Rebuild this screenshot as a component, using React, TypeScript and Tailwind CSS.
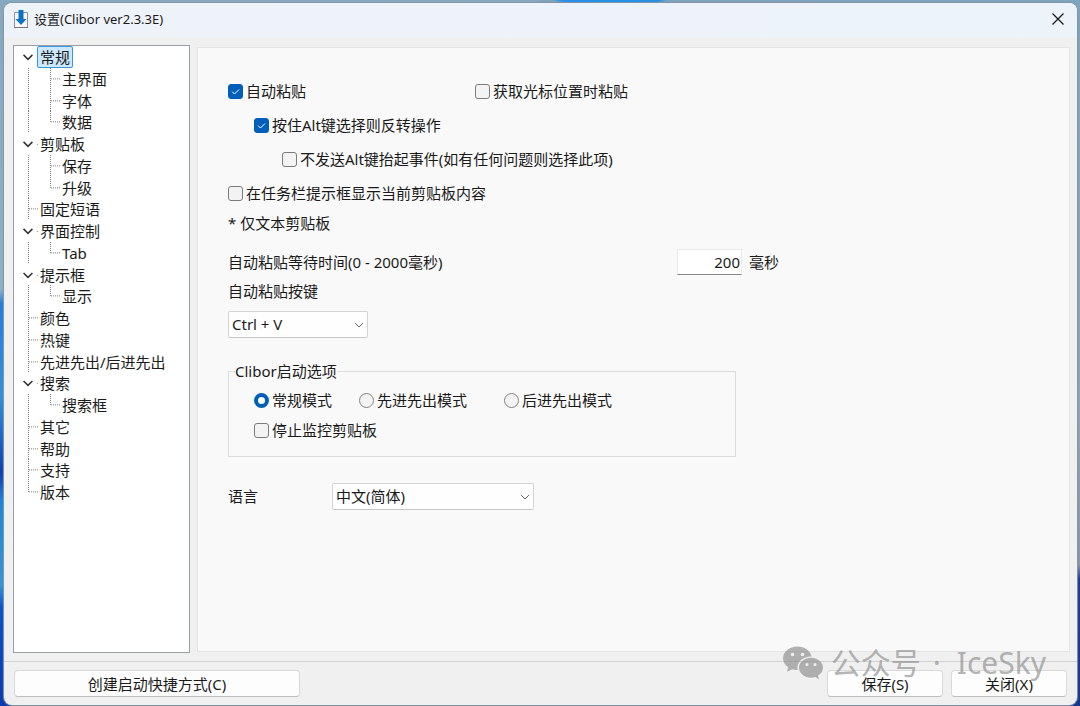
import { useId, useState, type ReactNode } from "react";

type Node = { label: string; children?: string[] };

const TREE: Node[] = [
  { label: "常规", children: ["主界面", "字体", "数据"] },
  { label: "剪贴板", children: ["保存", "升级"] },
  { label: "固定短语" },
  { label: "界面控制", children: ["Tab"] },
  { label: "提示框", children: ["显示"] },
  { label: "颜色" },
  { label: "热键" },
  { label: "先进先出/后进先出" },
  { label: "搜索", children: ["搜索框"] },
  { label: "其它" },
  { label: "帮助" },
  { label: "支持" },
  { label: "版本" },
];

type Line = "through" | "branch" | "end" | "open" | "openFirst";

const ROWS: { label: string; lines: Line[] }[] = TREE.flatMap((node, i) => {
  const last = i === TREE.length - 1;
  const own: Line = node.children ? (i === 0 ? "openFirst" : "open") : last ? "end" : "branch";
  const kids = node.children ?? [];
  return [
    { label: node.label, lines: [own] },
    ...kids.map((label, k) => ({
      label,
      lines: ["through", k === kids.length - 1 ? "end" : "branch"] as Line[],
    })),
  ];
});

function Connector({ kind }: { kind: Line }) {
  if (kind === "open" || kind === "openFirst") {
    return (
      <svg className="h-full w-[22px] shrink-0 overflow-visible" viewBox="0 0 22 22" fill="none" aria-hidden="true">
        <path d="M8.500 9l4.500 4.500L17.500 9" stroke="#333" strokeWidth="1.500" />
        {kind === "open" && <path d="M22 11.500h1" stroke="#888" />}
      </svg>
    );
  }
  return (
    <svg className="h-full w-[22px] shrink-0 overflow-visible" aria-hidden="true" stroke="#808080" strokeDasharray="1 1">
      <line x1="13.5" x2="13.5" y1="0" y2={kind === "end" ? "50%" : "100%"} />
      {kind !== "through" && <line x1="14" x2="23" y1="50%" y2="50%" />}
    </svg>
  );
}

function Check({ label, checked = false, className = "" }: { label: string; checked?: boolean; className?: string }) {
  const id = useId();
  return (
    <div className={`flex h-6 items-center gap-[3px] ${className}`}>
      <span className="grid size-[15px] shrink-0">
        <input
          id={id}
          type="checkbox"
          defaultChecked={checked}
          className="peer col-start-1 row-start-1 size-[15px] appearance-none rounded-[3px] border border-[#7c7c7c] bg-[#f3f3f3] checked:border-[#005fb8] checked:bg-[#005fb8]"
        />
        <svg
          viewBox="0 0 15 15"
          fill="none"
          stroke="#fff"
          className="pointer-events-none col-start-1 row-start-1 hidden size-[15px] peer-checked:block"
        >
          <path d="M4 7.500L6.500 10L11 5.500" />
        </svg>
      </span>
      <label htmlFor={id} className="whitespace-nowrap">{label}</label>
    </div>
  );
}

function Radio({ label, checked = false, className = "" }: { label: string; checked?: boolean; className?: string }) {
  const id = useId();
  return (
    <div className={`flex h-6 items-center gap-[3px] ${className}`}>
      <input
        id={id}
        type="radio"
        name="startup"
        defaultChecked={checked}
        className="size-[15px] shrink-0 appearance-none rounded-full border border-[#858585] bg-[#f3f3f3] checked:border-4 checked:border-[#005fb8] checked:bg-white"
      />
      <label htmlFor={id} className="whitespace-nowrap">{label}</label>
    </div>
  );
}

function Select({ id, options, className }: { id: string; options: string[]; className: string }) {
  return (
    <div className={`grid h-[27px] ${className}`}>
      <select
        id={id}
        className="col-start-1 row-start-1 w-full appearance-none rounded-xs border border-[#d4d4d4] border-b-[#c6c6c6] bg-[#fefefe] pr-6 pb-px pl-[3px]"
      >
        {options.map((o) => (
          <option key={o}>{o}</option>
        ))}
      </select>
      <svg
        viewBox="0 0 10 6"
        fill="none"
        stroke="#666"
        className="pointer-events-none col-start-1 row-start-1 mr-1 h-[6px] w-[10px] self-center justify-self-end"
      >
        <path d="M1 1l4 4l4-4" />
      </svg>
    </div>
  );
}

function PushButton({ children, className }: { children: ReactNode; className: string }) {
  return (
    <button
      type="button"
      className={`h-[27px] rounded-[4px] border border-[#d9d9d9] border-b-[#bdbdbd] bg-[#fdfdfd] text-center ${className}`}
    >
      {children}
    </button>
  );
}

export default function App() {
  const [selected, setSelected] = useState("常规");
  return (
    <div className="flex min-h-screen bg-[radial-gradient(ellipse_58px_5px_at_56.5%_0,#1d93e8_0%,#2a8fe6_85%,transparent_100%),linear-gradient(180deg,#86a8c1_0%,#8fb0c6_41%,#1f7fe0_43%,#2b93e0_56%,#0a3fb5_67%,#1c86dc_71%,#2f97d8_83%,#0652d0_86%,#0a3ab0_100%),linear-gradient(180deg,#7fa4bf_0%,#8ba3b6_60%,#8596ac_80%,#183a96_82%,#16358c_100%)] bg-[length:100%_100%,50%_100%,100%_100%] bg-no-repeat pt-[3px] pr-[3px] pb-px pl-1 font-['Noto_Sans','Noto_Sans_CJK_SC',sans-serif] text-[15px] leading-5 text-[#1a1a1a]">
      <div className="relative flex min-w-0 flex-1 flex-col overflow-hidden rounded-lg bg-[#f0f0f0] shadow-[0_0_1px_1px_#8795a3]">
        <header className="flex h-[34px] shrink-0 items-center bg-linear-to-r from-[#eef3fa] to-[#edf3fb] pr-[13px] pb-0.5 pl-[9px] text-[13px]">
          <svg viewBox="0 0 16 19" className="h-[19px] w-4" fill="none" aria-hidden="true">
            <path d="M1.500 2.500h13v15h-13z" fill="#f7f7f7" stroke="#8d949a" />
            <path d="M1 17.500h14" stroke="#777" />
            <path d="M5.500 0h5v9h3L8 15L2.500 9h3z" fill="#0a72c4" />
          </svg>
          <h1 className="ml-[5px] flex-1">设置(Clibor ver2.3.3E)</h1>
          <button type="button" aria-label="关闭" className="flex size-3 items-center justify-center">
            <svg viewBox="0 0 12 12" className="size-3" stroke="#1a1a1a" strokeWidth="1.300">
              <path d="M.5.5l11 11M11.500.5l-11 11" />
            </svg>
          </button>
        </header>

        <main className="flex flex-1 gap-[7px] pt-2 pr-[7px] pb-2 pl-[9px]">
          <nav className="w-[177px] shrink-0 border border-[#9a9ea6] bg-white pl-px">
            <ul className="grid h-[457px] auto-rows-fr">
              {ROWS.map((row) => (
                <li key={row.label} className="flex min-h-0 items-center">
                  {row.lines.map((kind, i) => (
                    <Connector key={i} kind={kind} />
                  ))}
                  <button
                    type="button"
                    onClick={() => setSelected(row.label)}
                    className={`h-full border px-[2px] whitespace-nowrap ${
                      selected === row.label ? "rounded-xs border-[#3a96dd] bg-[#cce8ff]" : "border-transparent"
                    }`}
                  >
                    {row.label}
                  </button>
                </li>
              ))}
            </ul>
          </nav>

          <section className="mt-[2px] mb-px min-w-0 flex-1 border border-[#e4e4e4] bg-[#f9f9f9] px-[30px] pt-[31px]">
            <div className="flex flex-col gap-[10px]">
              <div className="flex">
                <Check label="自动粘贴" checked className="w-[247px]" />
                <Check label="获取光标位置时粘贴" />
              </div>
              <Check label="按住Alt键选择则反转操作" checked className="pl-[26px]" />
              <Check label="不发送Alt键抬起事件(如有任何问题则选择此项)" className="pl-[54px]" />
              <Check label="在任务栏提示框显示当前剪贴板内容" />
            </div>
            <p className="mt-[6px] flex h-6 items-center">* 仅文本剪贴板</p>

            <div className="mt-[14px] flex h-[26px] items-center">
              <label htmlFor="wait" className="w-[449px]">自动粘贴等待时间(0 - 2000毫秒)</label>
              <input
                id="wait"
                type="text"
                defaultValue="200"
                className="h-[26px] w-[65px] border border-[#ebebeb] border-b-[#868686] bg-white pr-px pb-px text-right"
              />
              <span className="ml-[7px]">毫秒</span>
            </div>

            <label htmlFor="key" className="mt-1 flex h-6 items-center">自动粘贴按键</label>
            <Select id="key" options={["Ctrl + V", "Shift + Insert"]} className="mt-[8px] w-[140px]" />

            <fieldset className="mt-[21px] max-w-[508px] border border-[#dcdcdc] pb-[14px] pl-[25px]">
              <legend className="-ml-[19px] h-6 leading-6">Clibor启动选项</legend>
              <div className="mt-[5px] flex">
                <Radio label="常规模式" checked className="w-[105px]" />
                <Radio label="先进先出模式" className="w-[145px]" />
                <Radio label="后进先出模式" />
              </div>
              <Check label="停止监控剪贴板" className="mt-[6px]" />
            </fieldset>

            <div className="mt-[26px] flex items-center">
              <label htmlFor="lang" className="w-[104px] pb-0.5">语言</label>
              <Select id="lang" options={["中文(简体)", "English", "日本語"]} className="w-[202px]" />
            </div>
          </section>
        </main>

        <footer className="flex shrink-0 gap-2 border-t border-[#d2d2d2] pt-2 pr-[10px] pb-2 pl-[10px]">
          <PushButton className="w-[286px]">创建启动快捷方式(C)</PushButton>
          <PushButton className="ml-auto w-[116px]">保存(S)</PushButton>
          <PushButton className="w-[116px]">关闭(X)</PushButton>
        </footer>

        <div className="pointer-events-none absolute right-[31px] bottom-[22px] flex items-center text-[30px] leading-10 whitespace-nowrap text-[#8a8a8a]/65">
          <svg viewBox="0 0 40 34" className="mr-2 h-[34px] w-10" aria-hidden="true">
            <path
              fill="currentColor"
              fillRule="evenodd"
              d="M14.500.5C6.500.5 0 5.700 0 12.300c0 3.700 2 6.900 5.200 9L4 25.800l5.100-2.500c1.800.5 3.400.7 5.600.7-.2-.9-.3-1.500-.3-2.200 0-6.300 6-11.300 13.200-11.300h1C27.300 4.600 21.500.5 14.500.5zM9.500 6.700a1.800 1.800 0 1 1 0 3.600 1.800 1.800 0 0 1 0-3.600zm10 0a1.800 1.800 0 1 1 0 3.600 1.800 1.800 0 0 1 0-3.600z"
            />
            <path
              fill="currentColor"
              fillRule="evenodd"
              d="M40 21.700c0-5.600-5.500-10-12-10s-12 4.400-12 10 5.500 10 12 10c1.500 0 2.900-.2 4.200-.6l3.900 2.100-1.100-3.600c3-1.900 5-4.800 5-7.900zM24 17a1.500 1.500 0 1 1 0 3 1.500 1.500 0 0 1 0-3zm8 0a1.500 1.500 0 1 1 0 3 1.500 1.500 0 0 1 0-3z"
            />
          </svg>
          <span className="flex gap-3">
            <span>公众号</span>
            <span>·</span>
            <span className="ml-1">IceSky</span>
          </span>
        </div>
      </div>
    </div>
  );
}
